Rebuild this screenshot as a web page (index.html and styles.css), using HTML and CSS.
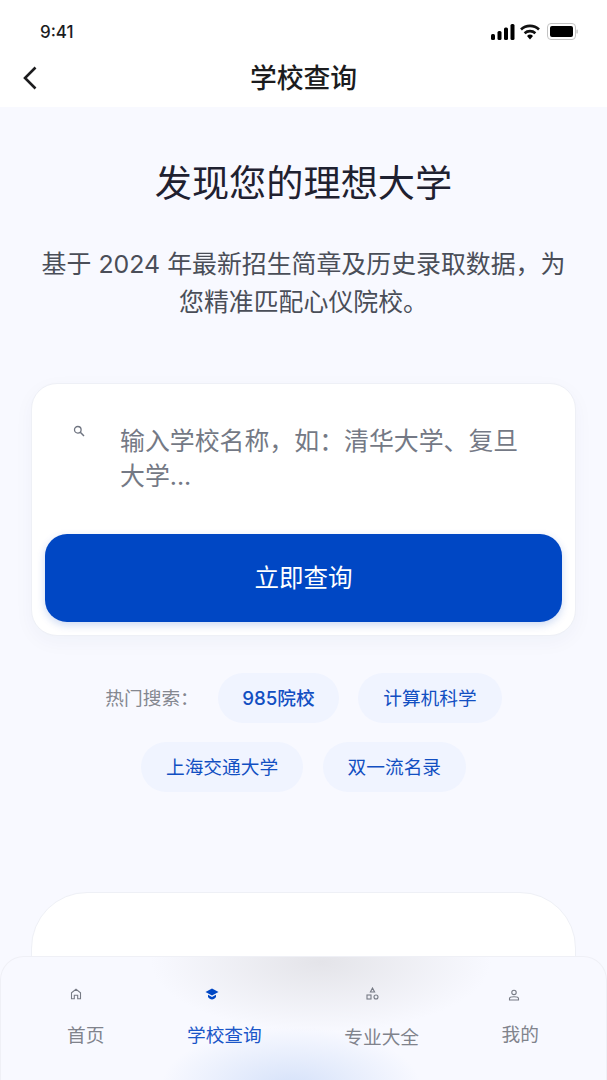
FILE: index.html
```html
<!DOCTYPE html>
<html lang="zh-CN">
<head>
  <meta charset="UTF-8">
  <title>学校查询</title>
  <link rel="stylesheet" href="styles.css">
</head>
<body>
  <div class="phone">
    <div class="top-bar">
      <div class="status-bar">
        <span class="time">9:41</span>
        <div class="status-icons">
          <svg width="24" height="16" viewBox="0 0 24 16"><rect x="0" y="10" width="4" height="6" rx="1.5"/><rect x="6.5" y="7" width="4" height="9" rx="1.5"/><rect x="13" y="3.5" width="4" height="12.5" rx="1.5"/><rect x="19.5" y="0" width="4" height="16" rx="1.5"/></svg>
          <svg class="wifi-icon" width="20" height="16" viewBox="0 0 20 16"><path d="M1 5.5a13 13 0 0 1 18 0" fill="none" stroke="#111" stroke-width="2.6"/><path d="M4.6 9.2a8 8 0 0 1 10.8 0" fill="none" stroke="#111" stroke-width="2.6"/><path d="M7 12a4.4 4.4 0 0 1 6 0l-3 3.6z"/></svg>
          <svg width="31" height="17" viewBox="0 0 31 17"><rect x="0.5" y="0.5" width="28" height="16" rx="3.5" fill="#fff" stroke="#c4c4c4"/><rect x="3" y="3" width="23" height="11" rx="2"/><rect x="29.5" y="6.5" width="1.2" height="4" rx="0.6" fill="#bbb"/></svg>
        </div>
      </div>
      <div class="title-bar">
        <svg class="back-icon" width="14" height="24" viewBox="0 0 14 24"><path d="M12.5 1.5 2 12l10.5 10.5" fill="none" stroke="#1c1c1e" stroke-width="2.6"/></svg>
        <h1 class="page-title">学校查询</h1>
      </div>
    </div>

    <main class="content">
      <h2 class="hero-title">发现您的理想大学</h2>
      <p class="hero-text">基于 2024 年最新招生简章及历史录取数据，为您精准匹配心仪院校。</p>

      <section class="search-card">
        <div class="search-input">
          <svg class="search-icon" width="12" height="12" viewBox="0 0 12 12"><circle cx="4.8" cy="4.8" r="3.3" fill="none" stroke="#6f7480" stroke-width="1.3"/><path d="M7.3 7.3 11 11" stroke="#6f7480" stroke-width="1.5"/></svg>
          <p class="placeholder">输入学校名称，如：清华大学、复旦大学...</p>
        </div>
        <button class="search-btn">立即查询</button>
      </section>

      <div class="hot-tags">
        <span class="hot-label">热门搜索：</span>
        <span class="tag tag-bold">985院校</span>
        <span class="tag">计算机科学</span>
        <span class="tag">上海交通大学</span>
        <span class="tag">双一流名录</span>
      </div>

      <section class="result-card"></section>
    </main>

    <nav class="bottom-nav">
      <div class="nav-item item-home">
        <svg width="12" height="12" viewBox="0 0 12 12"><path d="M1.5 10.8V4.8L6 1.2l4.5 3.6v6H7.7V7.2H4.3v3.6z" fill="none" stroke="#777b85" stroke-width="1.1"/></svg>
        <span class="nav-label">首页</span>
      </div>
      <div class="nav-item item-school active">
        <svg width="14" height="12" viewBox="0 0 14 12"><path d="M7 0.5 0.5 4 7 7.5 13.5 4z" fill="#0047c4"/><path d="M3 6.7v2.4C4 10.6 5.5 11.4 7 11.4s3-.8 4-2.3V6.7L7 8.9z" fill="#0047c4"/></svg>
        <span class="nav-label">学校查询</span>
      </div>
      <div class="nav-item item-major">
        <svg width="13" height="13" viewBox="0 0 13 13"><path d="M6.5 1 8.6 5H4.4z" fill="none" stroke="#777b85" stroke-width="1.1"/><rect x="1" y="8" width="4" height="4" fill="none" stroke="#777b85" stroke-width="1.1"/><circle cx="10" cy="10" r="2" fill="none" stroke="#777b85" stroke-width="1.1"/></svg>
        <span class="nav-label">专业大全</span>
      </div>
      <div class="nav-item item-mine">
        <svg width="12" height="12" viewBox="0 0 12 12"><circle cx="6" cy="3.4" r="2.2" fill="none" stroke="#777b85" stroke-width="1.1"/><path d="M1.5 11V9.6C1.5 8.4 3 7.8 6 7.8s4.5.6 4.5 1.8V11z" fill="none" stroke="#777b85" stroke-width="1.1"/></svg>
        <span class="nav-label">我的</span>
      </div>
    </nav>
  </div>
</body>
</html>
```

FILE: styles.css
```css
* {
  box-sizing: border-box;
}

html, body {
  margin: 0;
  padding: 0;
  background-color: #f8f9ff;
  font-family: Inter, "Noto Sans CJK SC", sans-serif;
}

.phone {
  position: relative;
  width: 607px;
  height: 1080px;
  overflow: hidden;
  background-color: #f8f9ff;
}

/* Top bars */
.top-bar {
  height: 107px;
  background-color: #fff;
}

.status-bar {
  height: 52px;
  padding: 11px 29px 0 40px;
  display: flex;
  justify-content: space-between;
  align-items: center;
}

.time {
  font-size: 17px;
  font-weight: 500;
  color: #1c1c1e;
}

.status-icons {
  display: flex;
  align-items: center;
  gap: 6px;
}

.wifi-icon {
  margin: 0 1px 0 -1px;
}

.title-bar {
  position: relative;
  height: 55px;
  padding-bottom: 7px;
  display: flex;
  justify-content: center;
  align-items: center;
}

.back-icon {
  position: absolute;
  left: 23px;
  top: 14px;
}

.page-title {
  margin: 0;
  font-size: 26.8px;
  font-weight: 500;
  color: #1c1c1e;
}

/* Main content */
.content {
  padding: 50px 31px 0;
}

.hero-title {
  margin: 0;
  text-align: center;
  font-size: 37.2px;
  line-height: 54px;
  font-weight: 400;
  color: #1f2130;
}

.hero-text {
  margin: 34px 0 0;
  text-align: center;
  font-size: 24.9px;
  line-height: 38px;
  color: #4a4e58;
}

.search-card {
  margin-top: 62px;
  height: 253px;
  padding: 13px;
  background-color: #fff;
  border: 1px solid #eef0f6;
  border-radius: 26px;
  box-shadow: 0 6px 20px rgba(20, 40, 100, 0.04);
}

.search-input {
  height: 137px;
  padding: 27px 32px 0 28px;
  display: flex;
  gap: 35px;
}

.search-icon {
  flex-shrink: 0;
  margin-top: 1px;
}

.placeholder {
  margin: 0;
  font-size: 24.9px;
  line-height: 35px;
  color: #747985;
}

.search-btn {
  display: block;
  width: 100%;
  height: 88px;
  padding: 0 0 4px;
  border: none;
  border-radius: 22px;
  background-color: #0047c4;
  color: #fff;
  font-family: inherit;
  font-size: 24.5px;
  box-shadow: 0 3px 8px rgba(0, 71, 196, 0.2);
}

.hot-tags {
  margin-top: 37px;
  display: flex;
  flex-wrap: wrap;
  justify-content: center;
  align-items: center;
  gap: 19px 19.5px;
}

.hot-label {
  padding-bottom: 3px;
  font-size: 18.7px;
  color: #84878f;
}

.tag {
  height: 50px;
  padding: 0 25px 3px;
  display: flex;
  align-items: center;
  border-radius: 25px;
  background-color: #f0f4ff;
  font-size: 18.7px;
  color: #124fc2;
}

.tag-bold {
  padding: 0 24px 3px;
  font-weight: 500;
}

.result-card {
  margin-top: 100px;
  height: 300px;
  background-color: #fff;
  border: 1px solid #eef0f6;
  border-radius: 56px;
}

/* Bottom navigation */
.bottom-nav {
  position: absolute;
  left: 0;
  right: 0;
  bottom: 0;
  height: 124px;
  padding: 0 67px 0 66px;
  display: flex;
  justify-content: space-between;
  border: 1px solid #eff0f6;
  border-bottom: none;
  border-radius: 24px 24px 0 0;
  background:
    radial-gradient(ellipse 130px 60px at 290px 130px, rgba(205, 220, 248, 0.8), rgba(205, 220, 248, 0)),
    radial-gradient(ellipse 170px 70px at 320px 5px, rgba(228, 228, 233, 1), rgba(228, 228, 233, 0)),
    #f8f9ff;
}

.nav-item {
  display: flex;
  flex-direction: column;
  align-items: center;
}

.nav-item svg {
  flex-shrink: 0;
}

.nav-label {
  font-size: 18.7px;
  line-height: 26px;
  color: #80838c;
}

.active .nav-label {
  color: #1a56c8;
}

.item-home {
  padding-top: 31px;
}

.item-home svg {
  margin-right: 20px;
}

.item-home .nav-label {
  margin-top: 23px;
}

.item-school {
  padding-top: 31px;
}

.item-school svg {
  margin-right: 24px;
}

.item-school .nav-label {
  margin-top: 23px;
}

.item-major {
  padding-top: 30px;
}

.item-major svg {
  margin-right: 18px;
}

.item-major .nav-label {
  margin-top: 25px;
}

.item-mine {
  padding-top: 32px;
}

.item-mine svg {
  margin-right: 12px;
}

.item-mine .nav-label {
  margin-top: 21px;
}
```
